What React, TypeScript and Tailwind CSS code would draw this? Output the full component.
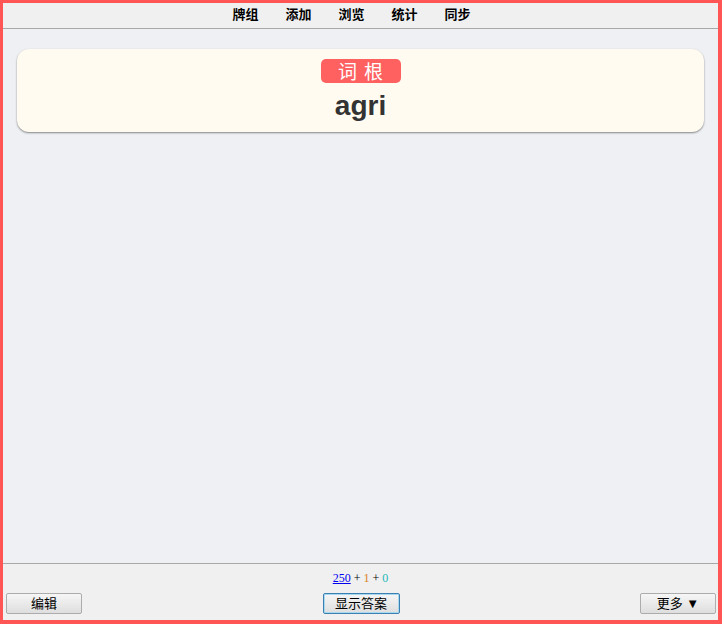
import React from 'react';

const cjk = '"Liberation Sans", "Noto Sans CJK SC", sans-serif';

const navItems = ['牌组', '添加', '浏览', '统计', '同步'];

function ToolButton({ label, focused = false }: { label: React.ReactNode; focused?: boolean }) {
  return (
    <button
      className={`h-[21px] rounded-[2px] border text-[13px] leading-none text-black bg-gradient-to-b from-[#f6f6f6] to-[#dedede] ${
        focused ? 'w-[77px] border-[#3c7fb1] shadow-[inset_0_0_0_1px_#a8d8f0]' : 'w-[76px] border-[#acacac]'
      }`}
      style={{ fontFamily: cjk }}
    >
      {label}
    </button>
  );
}

export default function App() {
  return (
    <div className="w-[724px] h-[627px] bg-white">
      <div className="w-[722px] h-[624px] border-[4px] border-[#ff5555] border-t-[3px] border-l-[3px] flex flex-col bg-[#eff0f4]">
        {/* top toolbar */}
        <div className="h-[26px] bg-[#f0f0f0] border-b border-[#a8a8a8] flex items-center justify-center gap-[27px] pr-[18px] pb-[2px]">
          {navItems.map((item) => (
            <span key={item} className="text-[13px] font-bold text-black" style={{ fontFamily: cjk }}>
              {item}
            </span>
          ))}
        </div>

        {/* card area */}
        <div className="flex-1 px-[14px] pt-[20px]">
          <div className="h-[83px] rounded-[12px] bg-[#fffbf0] shadow-[0_1px_2px_rgba(0,0,0,0.45)] flex flex-col items-center pt-[10px]">
            <div
              className="h-[24px] w-[80px] rounded-[5px] bg-[#ff6161] text-white text-[19px] leading-[24px] text-center tracking-[7px] pl-[7px]"
              style={{ fontFamily: '"Noto Sans CJK SC", sans-serif' }}
            >
              词根
            </div>
            <div
              className="mt-[8px] text-[28px] font-bold text-[#333333] leading-[30px]"
              style={{ fontFamily: '"Liberation Sans", Arial, sans-serif' }}
            >
              agri
            </div>
          </div>
        </div>

        {/* bottom bar */}
        <div className="h-[57px] bg-[#f0f0f0] border-t border-[#a8a8a8] flex flex-col">
          <div
            className="h-[28px] flex items-center justify-center pb-[1px] text-[12px] leading-none"
            style={{ fontFamily: '"Liberation Serif", serif' }}
          >
            <span className="text-[#0000ee] underline">250</span>
            <span className="text-black mx-[3px]">+</span>
            <span className="text-[#d9801e]">1</span>
            <span className="text-black mx-[3px]">+</span>
            <span className="text-[#25b8b8]">0</span>
          </div>
          <div className="flex items-start justify-between pl-[3px] pr-[2px] pt-[1px]">
            <ToolButton label="编辑" />
            <ToolButton label="显示答案" focused />
            <ToolButton label="更多 ▼" />
          </div>
        </div>
      </div>
    </div>
  );
}
